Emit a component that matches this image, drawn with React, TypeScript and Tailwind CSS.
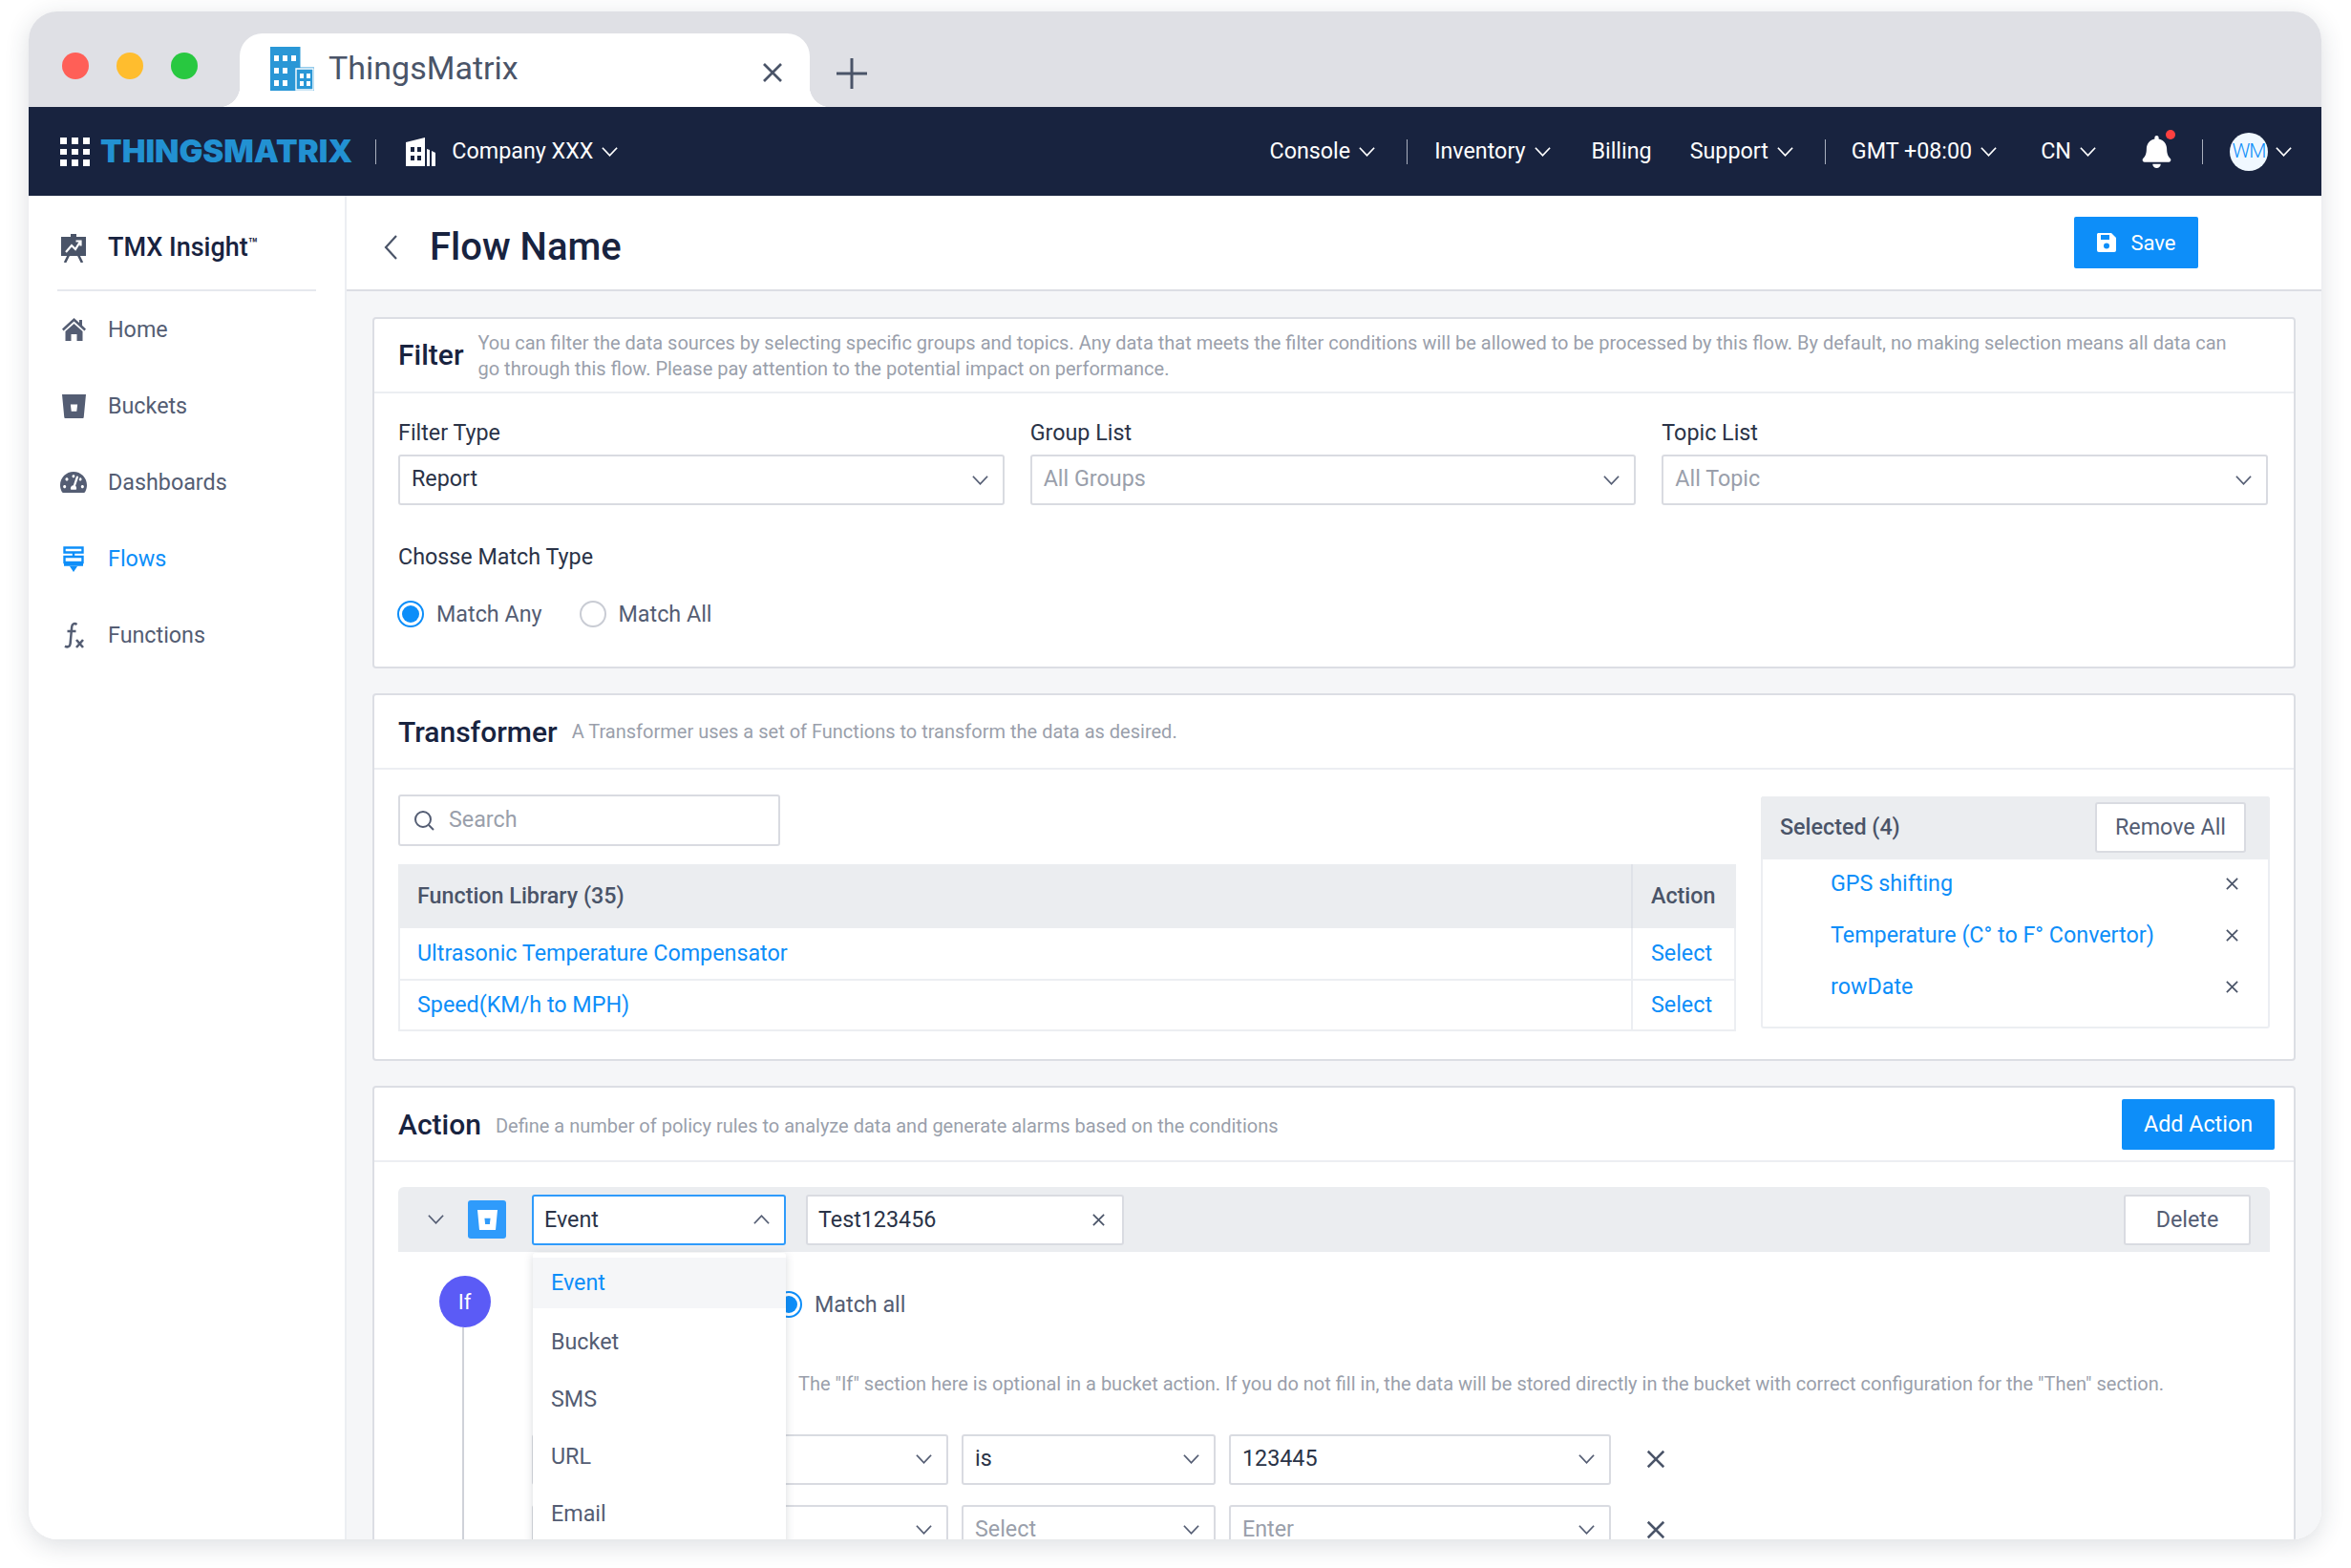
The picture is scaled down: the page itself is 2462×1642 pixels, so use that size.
import type { ReactNode } from "react";
import { FaBell, FaTachometerAlt } from "react-icons/fa";

const Chevron = ({ className = "", up = false }: { className?: string; up?: boolean }) => (
  <svg viewBox="0 0 20 12" className={className} fill="none" stroke="currentColor" strokeWidth="1.8">
    <path d={up ? "M2 10.5 10 2l8 8.5" : "M2 1.5 10 10l8-8.5"} />
  </svg>
);

const Cross = ({ className = "" }: { className?: string }) => (
  <svg viewBox="0 0 16 16" className={className} fill="none" stroke="currentColor" strokeWidth="1.8">
    <path d="M2 2l12 12M14 2 2 14" />
  </svg>
);

const BucketIcon = ({ className = "", inner = "#ffffff" }: { className?: string; inner?: string }) => (
  <svg viewBox="0 0 24 24" className={className}>
    <path d="M0 0h24l-2.2 23a1 1 0 0 1-1 1H3.2a1 1 0 0 1-1-1z" fill="currentColor" />
    <path d="M8.5 10h7l-.8 7H9.3z" fill={inner} />
  </svg>
);

const BuildingLogo = ({ className = "" }: { className?: string }) => (
  <svg viewBox="0 0 46 46" className={className}>
    <path d="M0 0h31v46H0zM26 22h20v24H26z" fill="#2a97d6" stroke="#2a97d6" />
    <path d="M27 23h18v22H27z" fill="#2a97d6" stroke="#fff" strokeWidth="1.4" />
    <path
      d="M4 9h5v6H4zM13 9h5v6h-5zM22 9h5v6h-5zM4 22h5v6H4zM13 22h5v6h-5zM4 35h5v6H4zM13 35h5v6h-5zM31 28h4v5h-4zM38 28h4v5h-4zM31 36h4v5h-4zM38 36h4v5h-4z"
      fill="#fff"
    />
  </svg>
);

const NavLink = ({ label, arrow = true }: { label: string; arrow?: boolean }) => (
  <div className="flex items-center gap-[8px]">
    <span>{label}</span>
    {arrow && <Chevron className="w-[19px] h-[12px]" />}
  </div>
);

const NavSep = () => <div className="w-px h-[26px] bg-[#a9afbd]" />;

const SideItem = ({ icon, label, active = false }: { icon: ReactNode; label: string; active?: boolean }) => (
  <div className={`flex items-center h-[80px] ${active ? "text-[#0d8ef9]" : "text-[#545d73]"}`}>
    <div className="w-[30px] ml-[32px] mr-[21px] flex justify-center">{icon}</div>
    <span className="text-[23.3px]">{label}</span>
  </div>
);

const SelectBox = ({
  value,
  placeholder = false,
  className = "",
}: {
  value: string;
  placeholder?: boolean;
  className?: string;
}) => (
  <div
    className={`h-[53px] border-2 border-[#d9dbe1] rounded-[3px] bg-white flex items-center justify-between pl-[12px] pr-[14px] text-[23.3px] ${
      placeholder ? "text-[#9a9fab]" : "text-[#2a3347]"
    } ${className}`}
  >
    <span className="mt-[-2px]">{value}</span>
    <Chevron className="w-[19px] h-[12px] text-[#545d73]" />
  </div>
);

const Radio = ({ checked = false }: { checked?: boolean }) => (
  <div
    className={`w-[28px] h-[28px] rounded-full border-2 flex items-center justify-center bg-white ${
      checked ? "border-[#0d8ef9]" : "border-[#c9ccd4]"
    }`}
  >
    {checked && <div className="w-[18px] h-[18px] rounded-full bg-[#0d8ef9]" />}
  </div>
);

const CardHead = ({ title, children }: { title: string; children?: ReactNode }) => (
  <div className="flex items-center px-[25px] border-b-2 border-[#eceef2] h-[78px]">
    <h2 className="text-[30px] font-medium text-[#18233f] shrink-0">{title}</h2>
    {children}
  </div>
);

const libraryRows = ["Ultrasonic Temperature Compensator", "Speed(KM/h to MPH)"];
const selectedRows = ["GPS shifting", "Temperature (C° to F° Convertor)", "rowDate"];
const actionTypes = ["Bucket", "SMS", "URL", "Email"];

export default function App() {
  return (
    <div className="w-[2462px] h-[1642px] bg-white pt-[12px] pl-[30px] overflow-hidden font-['Roboto',sans-serif]">
      {/* Browser window */}
      <div className="w-[2401px] h-[1600px] rounded-[30px] overflow-hidden flex flex-col bg-white shadow-[0_6px_26px_rgba(40,50,70,0.16)]">
        {/* Title bar */}
        <div className="h-[100px] shrink-0 bg-[#dfe0e5] flex items-end">
          <div className="flex items-center gap-[29px] h-full pl-[35px] pt-[14px] w-[221px]">
            <div className="w-[28px] h-[28px] rounded-full bg-[#ff5f57] shrink-0" />
            <div className="w-[28px] h-[28px] rounded-full bg-[#ffbd2e] shrink-0" />
            <div className="w-[28px] h-[28px] rounded-full bg-[#28c840] shrink-0" />
          </div>
          <div className="relative w-[597px] h-[77px] bg-white rounded-t-[24px] flex items-center pl-[32px] pr-[27px]">
            <div className="absolute left-[-22px] bottom-0 w-[22px] h-[22px] bg-[radial-gradient(circle_at_0_0,#dfe0e5_22px,#ffffff_22.5px)]" />
            <div className="absolute right-[-22px] bottom-0 w-[22px] h-[22px] bg-[radial-gradient(circle_at_100%_0,#dfe0e5_22px,#ffffff_22.5px)]" />
            <BuildingLogo className="w-[46px] h-[46px] mt-[-4px]" />
            <span className="ml-[15px] text-[34px] text-[#4a5468] mt-[-5px]">ThingsMatrix</span>
            <Cross className="w-[24px] h-[24px] ml-auto text-[#4a5468] mt-[4px]" />
          </div>
          <svg viewBox="0 0 32 32" className="w-[32px] h-[32px] ml-[28px] mb-[19px] text-[#4a5468]" fill="none" stroke="currentColor" strokeWidth="3">
            <path d="M16 0v32M0 16h32" />
          </svg>
        </div>

        {/* Top nav */}
        <div className="h-[93px] shrink-0 bg-[#18233f] flex items-center text-white text-[23.3px] pl-[33px] pr-[30px]">
          <svg viewBox="0 0 31 30" className="w-[31px] h-[30px]" fill="#ffffff">
            <path d="M0 0h7v7H0zM12 0h7v7h-7zM24 0h7v7h-7zM0 12h7v6H0zM12 12h7v6h-7zM24 12h7v6h-7zM0 23h7v7H0zM12 23h7v7h-7zM24 23h7v7h-7z" />
          </svg>
          <span className="ml-[11px] text-[33px] font-black font-['Inter',sans-serif] tracking-[0px] text-[#2291d2]">
            THINGSMATRIX
          </span>
          <div className="ml-[24px] mr-[31px] w-px h-[26px] bg-[#a9afbd]" />
          <svg viewBox="0 0 31 30" className="w-[31px] h-[30px]" fill="#ffffff">
            <path d="M0 5 20 0v30H0zM22 12l3 1v17h-3zM27 14l4 2v14h-4z" />
            <path d="M5 10h4v5H5zM12 10h4v5h-4zM5 19h4v5H5zM12 19h4v5h-4z" fill="#18233f" />
          </svg>
          <div className="ml-[17px]">
            <NavLink label="Company XXX" />
          </div>
          <div className="ml-auto flex items-center">
            <NavLink label="Console" />
            <div className="ml-[32px] mr-[28px]">
              <NavSep />
            </div>
            <NavLink label="Inventory" />
            <div className="w-[42px]" />
            <NavLink label="Billing" arrow={false} />
            <div className="w-[40px]" />
            <NavLink label="Support" />
            <div className="ml-[32px] mr-[27px]">
              <NavSep />
            </div>
            <NavLink label="GMT +08:00" />
            <div className="w-[45px]" />
            <NavLink label="CN" />
            <div className="relative ml-[46px] mr-[31px]">
              <FaBell className="w-[33px] h-[34px]" />
              <div className="absolute right-[-3px] top-[-6px] w-[10px] h-[10px] rounded-full bg-[#ff4040]" />
            </div>
            <NavSep />
            <div className="ml-[28px] w-[40px] h-[40px] rounded-full bg-[#f0f8ff] text-[#0d8ef9] text-[21px] font-light flex items-center justify-center tracking-[-1px]">
              WM
            </div>
            <Chevron className="w-[19px] h-[12px] ml-[7px]" />
          </div>
        </div>

        <div className="flex-1 min-h-0 flex">
          {/* Sidebar */}
          <aside className="w-[333px] shrink-0 bg-white border-r-2 border-[#eceef2]">
            <div className="h-[100px] mx-[30px] pt-[11px] border-b-2 border-[#e6e8ee] flex items-center">
              <svg viewBox="0 0 26 30" className="w-[26px] h-[30px] ml-[4px]">
                <path d="M10 0h6v3h-6z" fill="#4a5468" />
                <path d="M0 3h26v20H0z" fill="#4a5468" />
                <path d="M8 22l-4 8M18 22l4 8" stroke="#4a5468" strokeWidth="2.6" />
                <path d="M5 19l6-7 4 4 5-8M15.5 7.5h5v5" stroke="#fff" strokeWidth="2.2" fill="none" />
              </svg>
              <span className="ml-[23px] text-[27px] font-medium text-[#18233f]">
                TMX Insight<sup className="text-[17px] align-[7px] top-0">™</sup>
              </span>
            </div>
            <SideItem
              icon={
                <svg viewBox="0 0 25 24" className="w-[25px] h-[24px]" fill="currentColor">
                  <path d="M12.5 0 0 11.5 1.6 13.4 12.5 3.4l10.9 10 1.6-1.9-4-3.7V2h-3v3z" />
                  <path d="M12.5 6 3.5 14v10h6v-7h6v7h6V14z" />
                </svg>
              }
              label="Home"
            />
            <SideItem icon={<BucketIcon className="w-[25px] h-[25px]" />} label="Buckets" />
            <SideItem icon={<FaTachometerAlt className="w-[28px] h-[28px]" />} label="Dashboards" />
            <SideItem
              active
              icon={
                <svg viewBox="0 0 22 27" className="w-[22px] h-[27px]" fill="none" stroke="currentColor" strokeWidth="2.4">
                  <path d="M1.5 1.5h19v5h-19zM1.5 11h19v6h-19zM11 6.5V11M1 19.5h20" />
                  <path d="M7 21h8l-4 6z" fill="currentColor" stroke="none" />
                </svg>
              }
              label="Flows"
            />
            <SideItem
              icon={
                <svg viewBox="0 0 22 28" className="w-[22px] h-[28px]" fill="none" stroke="currentColor" strokeWidth="2.5">
                  <path d="M14.5 3c-2.6-2-5-.7-5.3 2.3L7.6 23.2c-.3 3-3 4-5.6 2.4M4.5 10h9" />
                  <path d="M14 19l7 8M21 19l-7 8" strokeWidth="2.6" />
                </svg>
              }
              label="Functions"
            />
          </aside>

          {/* Main */}
          <main className="flex-1 min-w-0 bg-[#f5f6f8] overflow-hidden">
            <div className="h-[100px] bg-white border-b-2 border-[#dcdee4] flex items-center pl-[38px] pr-[129px]">
              <svg viewBox="0 0 16 28" className="w-[16px] h-[28px] mt-[10px] text-[#4a5468]" fill="none" stroke="currentColor" strokeWidth="2.2">
                <path d="M14 2 3 14l11 12" />
              </svg>
              <h1 className="ml-[33px] mt-[10px] text-[40px] font-medium text-[#18233f]">Flow Name</h1>
              <button className="ml-auto w-[130px] h-[54px] bg-[#0d8ef9] rounded-[2px] text-white text-[22px] flex items-center justify-center gap-[14px]">
                <svg viewBox="0 0 22 22" className="w-[22px] h-[22px]" fill="#ffffff">
                  <path d="M2 1h14l5 5v13a2 2 0 0 1-2 2H3a2 2 0 0 1-2-2V2z" />
                  <path d="M5 3h9v5H5z" fill="#0d8ef9" />
                  <circle cx="11" cy="14.5" r="3" fill="#0d8ef9" />
                </svg>
                Save
              </button>
            </div>

            <div className="pl-[27px] pr-[27px] pt-[27px] flex flex-col gap-[26px]">
              {/* Filter */}
              <section className="bg-white border-2 border-[#dcdee4] rounded-[4px] h-[368px]">
                <div className="flex items-center px-[25px] border-b-2 border-[#eceef2] h-[78px]">
                  <h2 className="text-[30px] font-medium text-[#18233f] shrink-0 mt-[-2px]">Filter</h2>
                  <p className="ml-[15px] mt-[2px] w-[1845px] text-[20px] leading-[27px] text-[#9a9fab]">
                    You can filter the data sources by selecting specific groups and topics. Any data that meets the filter conditions will be allowed to be processed by this flow. By default, no making selection means all data can go through this flow. Please pay attention to the potential impact on performance.
                  </p>
                </div>
                <div className="pl-[25px] pr-[27px] pt-[26px]">
                  <div className="grid grid-cols-3 gap-[27px]">
                    <div>
                      <div className="text-[23.3px] leading-[30px] text-[#2a3347] mb-[8px]">Filter Type</div>
                      <SelectBox value="Report" />
                    </div>
                    <div>
                      <div className="text-[23.3px] leading-[30px] text-[#2a3347] mb-[8px]">Group List</div>
                      <SelectBox value="All Groups" placeholder />
                    </div>
                    <div>
                      <div className="text-[23.3px] leading-[30px] text-[#2a3347] mb-[8px]">Topic List</div>
                      <SelectBox value="All Topic" placeholder />
                    </div>
                  </div>
                  <div className="mt-[39px] text-[23.3px] leading-[30px] text-[#2a3347]">Chosse Match Type</div>
                  <div className="mt-[28px] ml-[-1px] flex items-center text-[23.3px] text-[#545d73]">
                    <Radio checked />
                    <span className="ml-[13px]">Match Any</span>
                    <div className="ml-[39px]">
                      <Radio />
                    </div>
                    <span className="ml-[13px]">Match All</span>
                  </div>
                </div>
              </section>

              {/* Transformer */}
              <section className="bg-white border-2 border-[#dcdee4] rounded-[4px] h-[385px]">
                <CardHead title="Transformer">
                  <p className="ml-[15px] text-[20px] text-[#9a9fab]">
                    A Transformer uses a set of Functions to transform the data as desired.
                  </p>
                </CardHead>
                <div className="px-[25px] pt-[26px] flex gap-[26px]">
                  <div className="w-[1401px]">
                    <div className="w-[400px] h-[54px] border-2 border-[#d9dbe1] rounded-[3px] flex items-center pl-[14px] text-[23.3px] text-[#9a9fab]">
                      <svg viewBox="0 0 22 22" className="w-[22px] h-[22px] text-[#545d73]" fill="none" stroke="currentColor" strokeWidth="2">
                        <circle cx="10" cy="10" r="8" />
                        <path d="M16 16l5 5" />
                      </svg>
                      <span className="ml-[15px] mt-[-1px]">Search</span>
                    </div>
                    <div className="mt-[19px] text-[23.3px] border-x-2 border-b-2 border-[#eceef2] rounded-t-[4px]">
                      <div className="flex h-[67px] bg-[#ebedf0] font-medium text-[#4a5468] mx-[-2px]">
                        <div className="flex-1 pl-[20px] flex items-center">Function Library (35)</div>
                        <div className="w-[110px] pl-[19px] flex items-center border-l-2 border-[#dfe2e8]">Action</div>
                      </div>
                      {libraryRows.map((name, i) => (
                        <div key={name} className={`flex h-[53px] text-[#0d8ef9] ${i > 0 ? "border-t-2 border-[#eceef2]" : ""}`}>
                          <div className="flex-1 pl-[18px] flex items-center">{name}</div>
                          <div className="w-[108px] pl-[19px] flex items-center border-l-2 border-[#eceef2]">Select</div>
                        </div>
                      ))}
                    </div>
                  </div>
                  <div className="w-[533px] h-[243px] mt-[2px] border-2 border-[#eceef2] rounded-[3px]">
                    <div className="h-[66px] bg-[#ebedf0] flex items-center justify-between pl-[20px] pr-[25px] mx-[-2px] mt-[-2px] rounded-t-[3px]">
                      <span className="text-[23.3px] font-medium text-[#4a5468] mt-[-2px]">Selected (4)</span>
                      <button className="w-[158px] h-[53px] mt-[-2px] bg-white border-2 border-[#d9dbe1] rounded-[3px] text-[23.3px] text-[#545d73]">
                        Remove All
                      </button>
                    </div>
                    <div className="mt-[-2px]">
                      {selectedRows.map((name) => (
                        <div key={name} className="h-[54px] flex items-center pl-[71px] pr-[30px] text-[23.3px] text-[#0d8ef9]">
                          <span>{name}</span>
                          <Cross className="w-[15px] h-[15px] ml-auto text-[#4a5468]" />
                        </div>
                      ))}
                    </div>
                  </div>
                </div>
              </section>

              {/* Action */}
              <section className="relative bg-white border-2 border-[#dcdee4] rounded-[4px] h-[600px]">
                <CardHead title="Action">
                  <p className="ml-[15px] mt-[3px] text-[20px] text-[#9a9fab]">
                    Define a number of policy rules to analyze data and generate alarms based on the conditions
                  </p>
                  <button className="ml-auto mr-[-5px] w-[160px] h-[53px] bg-[#0d8ef9] rounded-[2px] text-white text-[23.3px]">
                    Add Action
                  </button>
                </CardHead>
                <div className="px-[25px] pt-[26px]">
                  <div className="h-[68px] bg-[#ebedf0] rounded-t-[6px] flex items-center pl-[30px] pr-[20px]">
                    <Chevron className="w-[19px] h-[12px] text-[#545d73]" />
                    <div className="ml-[24px] w-[40px] h-[40px] bg-[#2f9bfb] rounded-[3px] flex items-center justify-center text-white">
                      <BucketIcon className="w-[21px] h-[21px]" inner="#2f9bfb" />
                    </div>
                    <div className="ml-[27px] w-[266px] h-[53px] bg-white border-2 border-[#2f9bfb] rounded-[3px] flex items-center justify-between pl-[11px] pr-[14px] text-[23.3px] text-[#2a3347]">
                      <span>Event</span>
                      <Chevron up className="w-[19px] h-[12px] text-[#545d73]" />
                    </div>
                    <div className="ml-[21px] w-[333px] h-[53px] bg-white border-2 border-[#d9dbe1] rounded-[3px] flex items-center justify-between pl-[11px] pr-[17px] text-[23.3px] text-[#2a3347]">
                      <span>Test123456</span>
                      <Cross className="w-[15px] h-[15px] text-[#4a5468]" />
                    </div>
                    <button className="ml-auto w-[133px] h-[53px] bg-white border-2 border-[#d9dbe1] rounded-[3px] text-[23.3px] text-[#545d73]">
                      Delete
                    </button>
                  </div>

                  <div className="flex">
                    {/* If rail */}
                    <div className="w-[140px] shrink-0 flex flex-col items-center pl-[8px] pt-[25px] pr-[9px]">
                      <div className="w-[54px] h-[54px] shrink-0 rounded-full bg-[#5b5bf6] text-white text-[22px] flex items-center justify-center">
                        If
                      </div>
                      <div className="w-[2px] h-[300px] mr-[3px] bg-[#cfd2d9]" />
                    </div>
                    <div className="pt-[38px]">
                      <div className="flex items-center pl-[255px] text-[23.3px] text-[#545d73]">
                        <Radio checked />
                        <span className="ml-[13px]">Match all</span>
                      </div>
                      <p className="mt-[51px] ml-[279px] text-[20px] leading-[28px] whitespace-nowrap text-[#9a9fab]">
                        The "If" section here is optional in a bucket action. If you do not fill in, the data will be stored directly in the bucket with correct configuration for the "Then" section.
                      </p>
                      <div className="mt-[39px] flex flex-col gap-[21px]">
                        <div className="flex items-center gap-[14px]">
                          <SelectBox value="" className="w-[436px]" />
                          <SelectBox value="is" className="w-[266px]" />
                          <SelectBox value="123445" className="w-[400px]" />
                          <Cross className="w-[22px] h-[22px] ml-[22px] text-[#4a5468]" />
                        </div>
                        <div className="flex items-center gap-[14px]">
                          <SelectBox value="" className="w-[436px]" />
                          <SelectBox value="Select" placeholder className="w-[266px]" />
                          <SelectBox value="Enter" placeholder className="w-[400px]" />
                          <Cross className="w-[22px] h-[22px] ml-[22px] text-[#4a5468]" />
                        </div>
                      </div>
                    </div>
                  </div>
                </div>

                {/* Open action type menu */}
                <div className="absolute left-[166px] top-[173px] w-[265px] h-[320px] pt-[5px] bg-white shadow-[0_2px_10px_rgba(40,50,70,0.18)] text-[23.3px] text-[#545d73] rounded-[3px]">
                  <div className="h-[53px] bg-[#f5f6f8] text-[#0d8ef9] flex items-center pl-[19px]">Event</div>
                  {actionTypes.map((item) => (
                    <div key={item} className="h-[60px] pt-[4px] flex items-center pl-[19px] [&:nth-child(2)]:mt-[3px]">
                      {item}
                    </div>
                  ))}
                </div>
              </section>
            </div>
          </main>
        </div>
      </div>
    </div>
  );
}
